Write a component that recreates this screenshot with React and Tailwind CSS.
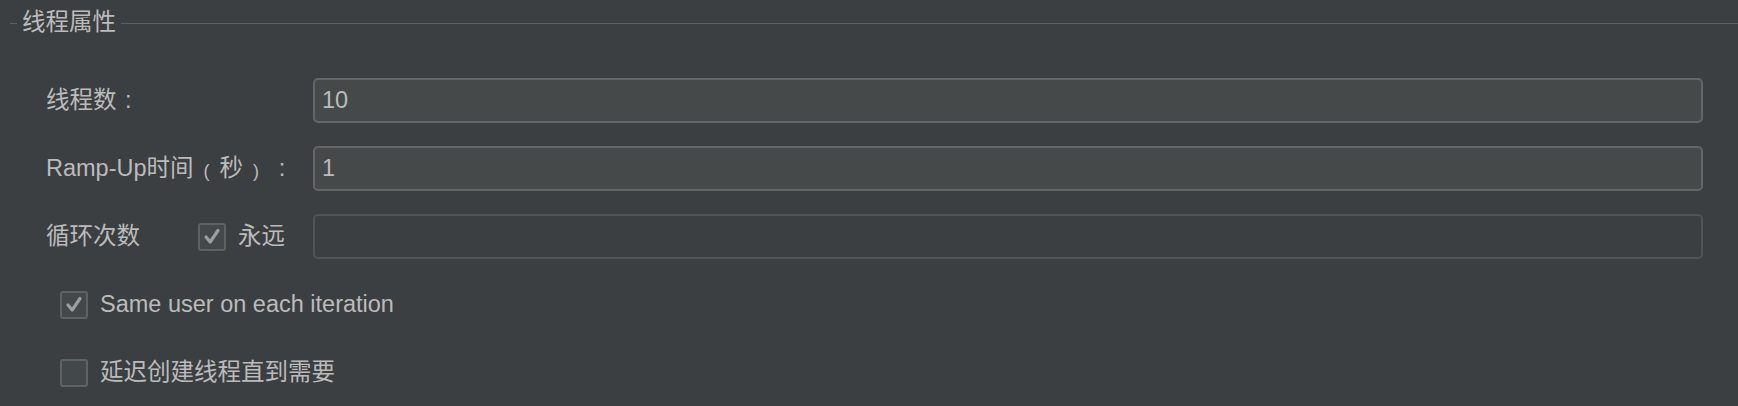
import React from "react";

const font = { fontFamily: '"Liberation Sans", "Noto Sans CJK SC", sans-serif' };

function Check({ checked }) {
  return (
    <div className="w-[28px] h-[28px] shrink-0 rounded-[3px] border-2 border-[#5f6263] bg-[#43484a] flex items-center justify-center">
      {checked && (
        <svg width="18" height="17" viewBox="0 0 18 17">
          <path d="M3 9 L7.2 14 L15 2.5" fill="none" stroke="#9c9d9e" strokeWidth="3.2" strokeLinecap="round" strokeLinejoin="round" />
        </svg>
      )}
    </div>
  );
}

function Input({ value, disabled }) {
  return (
    <div
      className={
        "flex-1 h-[45px] rounded-[5px] border-2 flex items-center pl-[7px] " +
        (disabled ? "border-[#515455] bg-[#3c3f41]" : "border-[#636566] bg-[#45494a]")
      }
    >
      <span className="text-[23.5px] text-[#bbbbbb]">{value}</span>
    </div>
  );
}

export default function App() {
  return (
    <div className="w-[1738px] h-[406px] bg-[#3c3f41] overflow-hidden text-[#bbbbbb]" style={font}>
      <div className="h-[46px] flex items-center pl-[10px]">
        <div className="w-[7px] h-px bg-[#5c5e5f]" />
        <span className="text-[23.5px] px-[5px] leading-none">线程属性</span>
        <div className="flex-1 h-px bg-[#5c5e5f]" />
      </div>
      <div className="mt-[32px] flex flex-col gap-[23px] pl-[46px] pr-[35px]">
        <div className="h-[45px] flex items-center">
          <div className="w-[267px] text-[23.5px] whitespace-nowrap">
            线程数<span className="inline-block w-[23.5px] text-center">:</span>
          </div>
          <Input value="10" />
        </div>
        <div className="h-[45px] flex items-center">
          <div className="w-[267px] text-[23.5px] whitespace-nowrap">
            Ramp-Up时间
            <span className="inline-block w-[26px] text-center text-[18px] relative top-[1px]">(</span>
            秒
            <span className="inline-block w-[26px] text-center text-[18px] relative top-[1px]">)</span>
            <span className="inline-block w-[26px] text-center">:</span>
          </div>
          <Input value="1" />
        </div>
        <div className="h-[45px] flex items-center">
          <div className="w-[267px] flex items-center text-[23.5px]">
            <span className="w-[152px]">循环次数</span>
            <Check checked />
            <span className="ml-[12px]">永远</span>
          </div>
          <Input value="" disabled />
        </div>
        <div className="h-[45px] flex items-center pl-[14px]">
          <Check checked />
          <span className="ml-[12px] text-[23.5px]">Same user on each iteration</span>
        </div>
        <div className="h-[45px] flex items-center pl-[14px]">
          <Check />
          <span className="ml-[12px] text-[23.5px]">延迟创建线程直到需要</span>
        </div>
      </div>
    </div>
  );
}
